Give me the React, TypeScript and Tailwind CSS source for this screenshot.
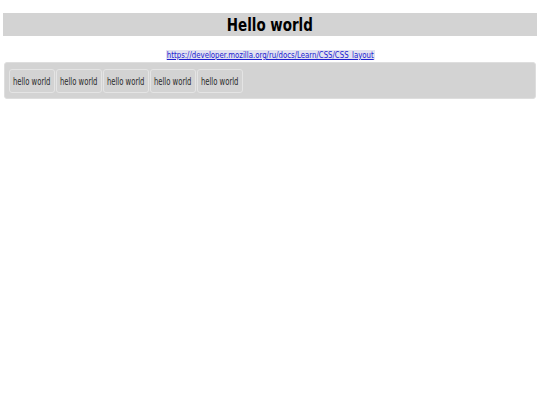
import React from "react";

const items = ["hello world", "hello world", "hello world", "hello world", "hello world"];

export default function App() {
	return (
		<div className="min-h-[405px] bg-white pt-[13px] px-[3px] font-['DejaVu_Sans_Condensed','DejaVu_Sans',sans-serif] text-black">
			<h1 className="bg-[#d3d3d3] h-[23px] flex items-center justify-center text-[18px] font-bold leading-none">
				<span className="inline-block scale-x-[0.83] whitespace-nowrap">Hello world</span>
			</h1>
			<div className="flex justify-center mt-[14px] mb-[2px]">
				<a href="#" className="w-[209px] h-[10px] bg-[#e2e2f0] text-[#2020d0] underline text-[9px] leading-[10px] flex justify-center overflow-visible">
					<span className="inline-block scale-x-[0.86] whitespace-nowrap">
						https://developer.mozilla.org/ru/docs/Learn/CSS/CSS_layout
					</span>
				</a>
			</div>
			<div className="mx-[1px] bg-[#d3d3d3] border border-[#dedede] rounded-[3px] pt-[6px] pb-[5px] px-[4px] flex gap-[1px]">
				{items.map((item, i) => (
					<div
						key={i}
						className="w-[46px] h-[24px] flex items-center justify-center border border-[#e4e4e4] rounded-[3px] text-[10px] text-[#2a2a2a]"
					>
						<span className="inline-block scale-x-[0.76] whitespace-nowrap">{item}</span>
					</div>
				))}
			</div>
		</div>
	);
}
